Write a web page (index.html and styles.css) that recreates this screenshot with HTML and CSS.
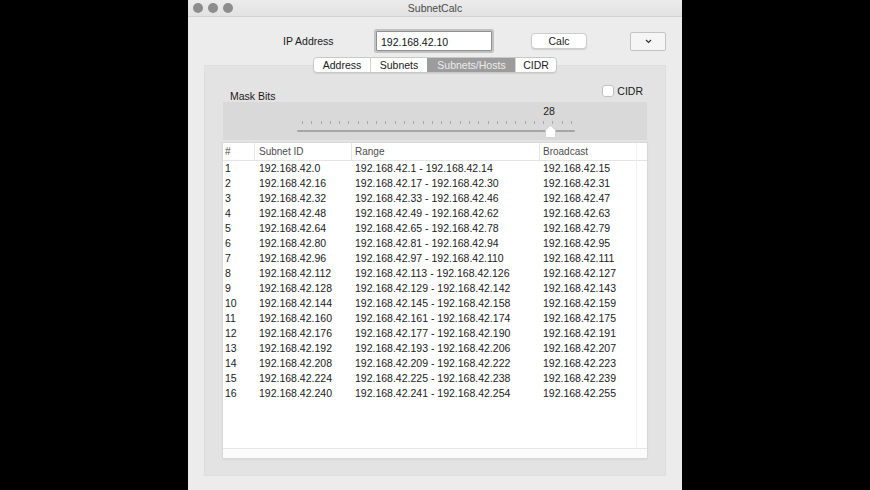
FILE: index.html
```html
<!DOCTYPE html>
<html lang="en">
<head>
  <meta charset="UTF-8">
  <title>SubnetCalc</title>
  <link rel="stylesheet" href="styles.css">
</head>
<body>
  <div class="window">
    <div class="titlebar">
      <div class="lights"><span></span><span></span><span></span></div>
      <div class="title">SubnetCalc</div>
    </div>

    <div class="toolbar">
      <label class="ip-label">IP Address</label>
      <input class="ip-input" type="text" value="192.168.42.10">
      <button class="calc">Calc</button>
      <button class="menu">
        <svg width="7" height="5" viewBox="0 0 7 5"><polyline points="1,1 3.5,3.5 6,1" fill="none" stroke="#333" stroke-width="1.2"/></svg>
      </button>
    </div>

    <div class="tabs">
      <div class="tab tab-address">Address</div>
      <div class="tab tab-subnets">Subnets</div>
      <div class="tab tab-hosts selected">Subnets/Hosts</div>
      <div class="tab tab-cidr">CIDR</div>
    </div>

    <div class="group">
      <div class="mask-head">
        <div class="mask-label">Mask Bits</div>
        <div class="cidr-check"><span class="box"></span>CIDR</div>
      </div>

      <div class="slider-box">
        <div class="slider">
          <div class="slider-value" style="left: 252px">28</div>
          <div class="ticks"></div>
          <div class="track"></div>
          <svg class="thumb" style="left: 248px" width="11" height="13" viewBox="0 0 11 13">
            <path d="M5.5 0.5 L10.5 5 L10.5 11.5 Q10.5 12.5 9.5 12.5 L1.5 12.5 Q0.5 12.5 0.5 11.5 L0.5 5 Z" fill="#fff" stroke="#c4c4c4" stroke-width="0.6"/>
          </svg>
        </div>
      </div>

      <div class="table-view">
        <div class="table-body">
          <table class="subnets">
            <thead>
              <tr><th>#</th><th>Subnet ID</th><th>Range</th><th>Broadcast</th></tr>
            </thead>
            <tbody>
              <tr><td>1</td><td>192.168.42.0</td><td>192.168.42.1 - 192.168.42.14</td><td>192.168.42.15</td></tr>
              <tr><td>2</td><td>192.168.42.16</td><td>192.168.42.17 - 192.168.42.30</td><td>192.168.42.31</td></tr>
              <tr><td>3</td><td>192.168.42.32</td><td>192.168.42.33 - 192.168.42.46</td><td>192.168.42.47</td></tr>
              <tr><td>4</td><td>192.168.42.48</td><td>192.168.42.49 - 192.168.42.62</td><td>192.168.42.63</td></tr>
              <tr><td>5</td><td>192.168.42.64</td><td>192.168.42.65 - 192.168.42.78</td><td>192.168.42.79</td></tr>
              <tr><td>6</td><td>192.168.42.80</td><td>192.168.42.81 - 192.168.42.94</td><td>192.168.42.95</td></tr>
              <tr><td>7</td><td>192.168.42.96</td><td>192.168.42.97 - 192.168.42.110</td><td>192.168.42.111</td></tr>
              <tr><td>8</td><td>192.168.42.112</td><td>192.168.42.113 - 192.168.42.126</td><td>192.168.42.127</td></tr>
              <tr><td>9</td><td>192.168.42.128</td><td>192.168.42.129 - 192.168.42.142</td><td>192.168.42.143</td></tr>
              <tr><td>10</td><td>192.168.42.144</td><td>192.168.42.145 - 192.168.42.158</td><td>192.168.42.159</td></tr>
              <tr><td>11</td><td>192.168.42.160</td><td>192.168.42.161 - 192.168.42.174</td><td>192.168.42.175</td></tr>
              <tr><td>12</td><td>192.168.42.176</td><td>192.168.42.177 - 192.168.42.190</td><td>192.168.42.191</td></tr>
              <tr><td>13</td><td>192.168.42.192</td><td>192.168.42.193 - 192.168.42.206</td><td>192.168.42.207</td></tr>
              <tr><td>14</td><td>192.168.42.208</td><td>192.168.42.209 - 192.168.42.222</td><td>192.168.42.223</td></tr>
              <tr><td>15</td><td>192.168.42.224</td><td>192.168.42.225 - 192.168.42.238</td><td>192.168.42.239</td></tr>
              <tr><td>16</td><td>192.168.42.240</td><td>192.168.42.241 - 192.168.42.254</td><td>192.168.42.255</td></tr>
            </tbody>
          </table>
          <div class="gutter">
            <div class="gutter-head"></div>
          </div>
        </div>
        <div class="hscroll"></div>
      </div>
    </div>
  </div>
</body>
</html>
```

FILE: styles.css
```css
body {
  margin: 0;
  background-color: #000;
  font-family: 'Liberation Sans', Arial, sans-serif;
  font-size: 10.5px;
  color: #1a1a1a;
  display: flex;
  justify-content: center;
  height: 490px;
  overflow: hidden;
}
.window {
  width: 494px;
  height: 490px;
  background-color: #ececec;
  display: flex;
  flex-direction: column;
}
.titlebar {
  height: 16px;
  flex-shrink: 0;
  border-bottom: 1px solid #d2d2d2;
  background: linear-gradient(#ececec, #e2e2e2);
  display: grid;
  grid-template-columns: 1fr auto 1fr;
  align-items: center;
}
.lights {
  display: flex;
  gap: 5px;
  padding-left: 5px;
}
.lights span {
  width: 10px;
  height: 10px;
  border-radius: 50%;
  background-color: #8d8d8d;
}
.title {
  color: #4a4a4a;
  font-size: 10.5px;
}
.toolbar {
  display: flex;
  flex-shrink: 0;
  align-items: center;
  padding: 14px 0 0 95px;
  height: 20px;
}
.ip-label {
  width: 93px;
}
.ip-input {
  box-sizing: border-box;
  width: 116px;
  height: 20px;
  margin: 0;
  padding: 1px 4px 0;
  font-family: 'Liberation Sans', Arial, sans-serif;
  font-size: 10.5px;
  color: #111;
  background: #fff;
  border: 1px solid #8f8f8f;
  box-shadow: 0 0 0 2px #c2c2c2;
  border-radius: 1px;
  outline: none;
}
button {
  font-family: 'Liberation Sans', Arial, sans-serif;
  font-size: 10.5px;
  color: #1a1a1a;
  cursor: pointer;
  padding: 0;
}
.calc {
  width: 56px;
  height: 16px;
  margin-left: 39px;
  background: #fff;
  border: 1px solid #cdcdcd;
  border-radius: 4px;
  box-shadow: 0 1px 1px rgba(0, 0, 0, 0.12);
}
.menu {
  width: 36px;
  height: 19px;
  margin-left: 43px;
  background: #f5f5f5;
  border: 1px solid #c3c3c3;
  border-radius: 2px;
  display: flex;
  align-items: center;
  justify-content: center;
}
.tabs {
  position: relative;
  z-index: 1;
  flex-shrink: 0;
  align-self: center;
  display: flex;
  margin-top: 6px;
  margin-bottom: -8px;
  height: 16px;
  background: #fff;
  border: 1px solid #c8c8c8;
  border-radius: 4px;
  box-sizing: border-box;
  box-shadow: 0 1px 1px rgba(0, 0, 0, 0.08);
  overflow: hidden;
}
.tab {
  display: flex;
  align-items: center;
  justify-content: center;
  border-left: 1px solid #d4d4d4;
  box-sizing: border-box;
}
.tab:first-child {
  border-left: none;
}
.tab-address { width: 56px; }
.tab-subnets { width: 57px; }
.tab-hosts { width: 88px; }
.tab-cidr { width: 41px; }
.tab.selected {
  background-color: #9c9c9c;
  color: #ececec;
  border-left-color: #9c9c9c;
}
.group {
  box-sizing: border-box;
  height: 411px;
  flex-shrink: 0;
  margin: 0 16px;
  padding: 0 18px 17px;
  background-color: #e3e3e3;
  border: 1px solid #dedede;
  display: flex;
  flex-direction: column;
}
.mask-head {
  height: 36px;
  flex-shrink: 0;
  display: flex;
  justify-content: space-between;
}
.mask-label {
  align-self: flex-end;
  padding-left: 7px;
  line-height: 11px;
}
.cidr-check {
  display: flex;
  align-items: center;
  gap: 3px;
  margin-top: 19px;
  margin-right: 4px;
  height: 12px;
}
.cidr-check .box {
  width: 12px;
  height: 12px;
  background: #fff;
  border: 1px solid #c2c2c2;
  border-radius: 3px;
  box-sizing: border-box;
}
.slider-box {
  height: 38px;
  flex-shrink: 0;
  background-color: #d9d9d9;
}
.slider {
  position: relative;
  box-sizing: border-box;
  width: 278px;
  height: 38px;
  padding-top: 19px;
  margin-left: 74px;
}
.slider-value {
  position: absolute;
  top: 3px;
  transform: translateX(-50%);
  line-height: 13px;
}
.ticks {
  height: 3px;
  margin-left: 5px;
  width: 270px;
  background: repeating-linear-gradient(to right, #a9a9a9 0 1px, transparent 1px 9.276px);
}
.track {
  height: 2px;
  margin-top: 6px;
  background-color: #a6a6a6;
  border-radius: 1px;
}
.thumb {
  position: absolute;
  top: 23px;
}
.table-view {
  margin-top: 3px;
  height: 315px;
  flex-shrink: 0;
  background: #fff;
  box-shadow: 0 0 0 1px #d8d8d8, 0 1px 2px rgba(0, 0, 0, 0.12);
  display: flex;
  flex-direction: column;
}
.table-body {
  flex: 1;
  display: flex;
}
.subnets {
  width: 413px;
  border-collapse: collapse;
  table-layout: fixed;
  align-self: flex-start;
}
.subnets th {
  height: 17px;
  padding: 0 0 0 4px;
  text-align: left;
  font-weight: normal;
  font-size: 10px;
  color: #4d4d4d;
  border-bottom: 1px solid #e4e4e4;
  box-shadow: inset 1px 0 #e6e6e6;
}
.subnets th:first-child {
  box-shadow: none;
}
.subnets td {
  height: 15px;
  padding: 0 0 0 4px;
  white-space: nowrap;
  line-height: 15px;
}
.subnets th:nth-child(1) { width: 29px; padding-left: 2px; }
.subnets th:nth-child(2) { width: 92px; padding-left: 5px; }
.subnets th:nth-child(3) { width: 184px; }
.subnets th:nth-child(4) { width: 93px; }
.subnets td:nth-child(1) { padding-left: 2px; }
.subnets td:nth-child(2) { padding-left: 5px; }
.gutter {
  flex: 1;
  border-left: 1px solid #eeeeee;
}
.gutter-head {
  height: 17px;
  border-bottom: 1px solid #e4e4e4;
}
.hscroll {
  height: 9px;
  border-top: 1px solid #e6e6e6;
  background: #fbfbfb;
}
```
